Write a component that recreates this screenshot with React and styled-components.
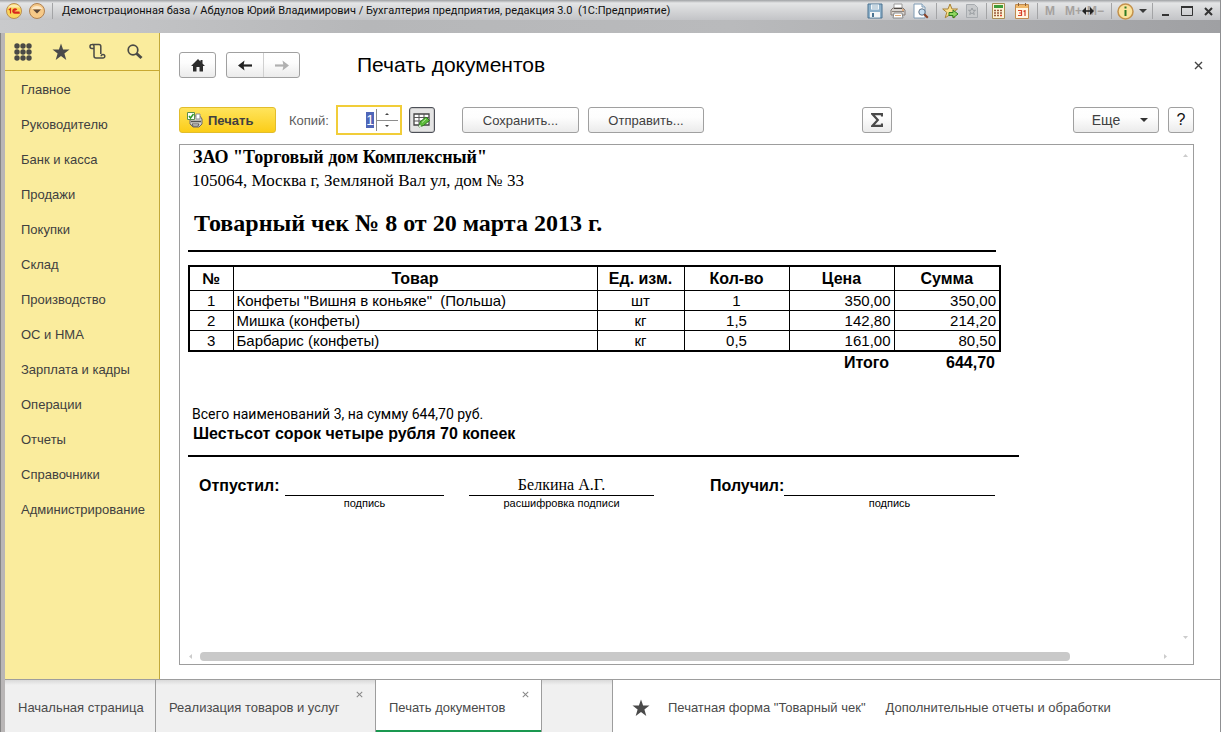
import React, { useEffect, useRef } from "react";
import styled, { createGlobalStyle, css } from "styled-components";

const SANS = '"Liberation Sans", Arial, sans-serif';
const SERIF = '"Liberation Serif", "Times New Roman", serif';
const LINE = "#9d9d9d";

const Global = createGlobalStyle`
  *, *::before, *::after { box-sizing: border-box; }
  body { margin: 0; font-family: ${SANS}; font-size: 13px; color: #3f3f3f; background: #fff; }
  button { font-family: inherit; font-size: inherit; color: inherit; padding: 0; margin: 0; border: 0; background: none; cursor: pointer; }
  h1, h2, p, ul { margin: 0; padding: 0; font-weight: normal; }
  svg { flex: none; }
`;

/* ---------- window frame ---------- */
const Window = styled.div`
  min-height: 100vh;
  display: flex;
  flex-direction: column;
  padding-left: 5px;
  border-right: 1px solid #8f9092;
  background: linear-gradient(90deg, #858585 0 1px, #b9b6b6 1px 5px, #fff 5px);
`;
const TitleBar = styled.header`
  height: 33px;
  margin-left: -5px;
  display: flex;
  align-items: flex-start;
  background:
    linear-gradient(90deg, #c9cacc 0, #b6b7b9 30%, #b9babc 60%, #9fa0a3 100%) 0 20px / 100% 13px no-repeat,
    linear-gradient(#9fa1a4 0, #e4e5e6 3px, #d2d3d5 12px, #c3c4c7 20px);
`;
const TitleGroup = styled.div`
  flex: none;
  display: flex;
  align-items: center;
  height: 22px;
  gap: ${(p) => p.$gap || 0}px;
  padding-left: ${(p) => p.$pad || 0}px;
`;
const TitleDivider = styled.span`
  width: 1px;
  height: 16px;
  background: #a3a4a6;
`;
const TitleText = styled.h1`
  flex: 1;
  min-width: 0;
  padding-left: 9px;
  font: 11px/22px Roboto, ${SANS};
  color: #101010;
  white-space: nowrap;
  overflow: hidden;
`;
const IconButton = styled.button`
  display: flex;
  align-items: center;
  justify-content: center;
  width: ${(p) => p.$w || 16}px;
  height: ${(p) => p.$h || 18}px;
`;
const MemoryButton = styled(IconButton)`
  justify-content: ${(p) => p.$align || "center"};
  font: bold 12px/18px ${SANS};
  color: #a5a19e;
`;
const ResizeMark = styled.span`
  position: relative;
  z-index: 1;
  display: flex;
`;

/* ---------- body ---------- */
const Body = styled.div`
  flex: 1;
  display: flex;
`;
const Sidebar = styled.nav`
  width: 155px;
  flex: none;
  background: #faec9d;
  border-right: 1px solid #c2a93a;
`;
const SideTools = styled.div`
  height: 38px;
  display: flex;
  align-items: center;
  justify-content: space-between;
  padding: 0 15px 0 9px;
  border-bottom: 1px solid #c8a932;
`;
const SideList = styled.ul`
  list-style: none;
  padding-top: 1px;
`;
const SideLink = styled.a`
  display: block;
  padding-left: 16px;
  line-height: 35px;
  color: #404040;
  text-decoration: none;
  white-space: nowrap;
`;

const Main = styled.main`
  flex: 1;
  min-width: 0;
  display: flex;
  flex-direction: column;
  padding: 19px 26px 14px 19px;
`;
const PageHead = styled.div`
  display: flex;
  align-items: center;
  height: 26px;
  margin-right: -9px;
`;
const PageTitle = styled.h2`
  flex: 1;
  padding-left: 57px;
  font-size: 21px;
  line-height: 28px;
  color: #000;
`;

const face = css`
  border: 1px solid #a0a0a0;
  border-radius: 3px;
  background: linear-gradient(#fff 0, #fdfdfd 40%, #ebebeb 100%);
`;
const Button = styled.button`
  ${face}
  display: flex;
  align-items: center;
  justify-content: center;
  width: ${(p) => p.$w}px;
  height: 26px;
  font-size: ${(p) => (p.$large ? 14 : 13)}px;
  color: #404040;
`;
const PrintButton = styled(Button)`
  gap: 5px;
  justify-content: flex-start;
  padding-left: 7px;
  border-color: #e2bd2c;
  background: linear-gradient(#ffe45c, #fbcd18);
  font-weight: bold;
`;
const ToggleButton = styled(Button)`
  border-color: #4c4f57;
  background: #e4e4e4;
  box-shadow: inset 0 0 0 1px #c9c9c9;
`;
const HelpButton = styled(Button)`
  font-size: 16px;
  color: #111;
`;
const NavGroup = styled.div`
  ${face}
  display: flex;
  margin-left: 10px;
  height: 26px;
`;
const NavHalf = styled.button`
  width: 36px;
  display: flex;
  align-items: center;
  justify-content: center;
  & + & { border-left: 1px solid #d0d0d0; }
`;
const Toolbar = styled.div`
  display: flex;
  align-items: center;
  height: 30px;
  margin: 27px 0 9px;
`;
const ToolGroup = styled.div`
  display: flex;
  align-items: center;
  gap: ${(p) => p.$gap}px;
  margin-left: ${(p) => p.$ml || 0}px;
`;
const Spring = styled.div`
  flex: ${(p) => p.$grow || 1};
`;
const CopyLabel = styled.label`
  margin: 0 7px 0 13px;
  font-size: 13px;
  color: #5c5c5c;
`;
const CopyField = styled.div`
  display: flex;
  align-items: stretch;
  width: 66px;
  height: 30px;
  padding: 2px;
  border: 2px solid #f1cd39;
  background: #fff;
`;
const CopyInput = styled.input`
  flex: 1;
  min-width: 0;
  padding: 0 2px 0 0;
  border: 0;
  outline: 0;
  text-align: right;
  font: 14px ${SANS};
  color: #222;
  caret-color: transparent;
  &::selection { background: #4f66b8; color: #fff; }
`;
const Stepper = styled.div`
  width: 22px;
  display: flex;
  flex-direction: column;
  border-left: 1px solid #8d8d8d;
`;
const Step = styled.button`
  flex: 1;
  display: flex;
  align-items: center;
  justify-content: center;
  & + & { border-top: 1px solid #8d8d8d; }
`;

/* ---------- print preview ---------- */
const Preview = styled.section`
  flex: 1;
  display: grid;
  grid-template-columns: minmax(0, 1fr) 16px;
  grid-template-rows: 1fr 15px;
  border: 1px solid ${LINE};
  color: #000;
`;
const Sheet = styled.article`
  padding: 2px 0 0 8px;
  overflow: hidden;
`;
const VScroll = styled.div`
  display: flex;
  flex-direction: column;
  justify-content: space-between;
  align-items: center;
  padding: 9px 0 10px;
`;
const HScroll = styled.div`
  display: flex;
  align-items: center;
  gap: 8px;
  padding: 0 10px 0 9px;
`;
const Track = styled.div`
  flex: 1;
`;
const Thumb = styled.div`
  width: 91%;
  height: 9px;
  border-radius: 4px;
  background: #c9c9c9;
`;
const Org = styled.p`
  padding-left: 5px;
  font: bold 18px/20px ${SERIF};
`;
const Address = styled.p`
  padding: 2px 0 0 4px;
  font: 17px/24px ${SERIF};
`;
const DocTitle = styled.h2`
  padding: 18px 0 2px 6px;
  font: bold 24px/24px ${SERIF};
`;
const Rule = styled.hr`
  width: ${(p) => p.$w}px;
  height: 2px;
  margin: ${(p) => p.$top}px 0 0;
  border: 0;
  background: #000;
`;
const Goods = styled.table`
  width: 811px;
  margin-top: 13px;
  table-layout: fixed;
  border-collapse: collapse;
  font-size: 15px;
  line-height: 19px;
  th, td { padding: 0 3px; border: 1px solid #000; white-space: pre; overflow: hidden; }
  thead th { height: 24px; border-top-width: 2px; font-size: 16px; }
  tbody td { height: 20px; }
  tbody tr:last-child td { border-bottom-width: 2px; }
  tr > :first-child { border-left-width: 2px; }
  tr > :last-child { border-right-width: 2px; }
  tfoot td { height: 22px; border: 0; padding-right: 5px; font-size: 16px; font-weight: bold; text-align: right; }
`;
const Cell = styled.td`
  text-align: ${(p) => p.$align || "center"};
`;
const Total = styled.p`
  padding: 31px 0 0 4px;
  font-size: 14px;
  line-height: 20px;
  font-family: Roboto, ${SANS};
`;
const Words = styled.p`
  padding-left: 5px;
  font-size: 16px;
  line-height: 20px;
  font-weight: bold;
`;
const Signatures = styled.div`
  display: flex;
  align-items: flex-start;
  padding: 19px 0 0 11px;
`;
const SignLabel = styled.span`
  width: ${(p) => p.$w}px;
  font-size: 16px;
  line-height: 20px;
  font-weight: bold;
`;
const SignLine = styled.div`
  width: ${(p) => p.$w}px;
  margin-right: ${(p) => p.$mr || 0}px;
  text-align: center;
`;
const SignName = styled.div`
  height: 20px;
  border-bottom: 1px solid #000;
  font: 16px/18px ${SERIF};
`;
const SignHint = styled.div`
  font-size: 11px;
  line-height: 14px;
`;

/* ---------- bottom panel ---------- */
const Bottom = styled.footer`
  display: flex;
  height: 53px;
  border-top: 1px solid ${LINE};
`;
const Tab = styled.div`
  position: relative;
  width: ${(p) => p.$w}px;
  flex: none;
  border-right: 1px solid ${LINE};
  background: ${(p) => (p.$active ? "#fff" : "linear-gradient(#d9d9d9 0, #f0f0f0 5px)")};
  ${(p) => p.$active && "box-shadow: inset 0 -2px #1a9850;"}
`;
const TabLink = styled.button`
  width: 100%;
  height: 52px;
  padding: 3px 0 0 13px;
  text-align: left;
  color: #4a4a4a;
  white-space: nowrap;
`;
const TabClose = styled.button`
  position: absolute;
  top: 11px;
  right: 12px;
  width: 7px;
  height: 7px;
  display: flex;
`;
const Favourites = styled.div`
  display: flex;
  align-items: center;
  gap: 20px;
  padding: 3px 0 0 19px;
  white-space: nowrap;
`;
const FavLink = styled.a`
  color: #4a4a4a;
  text-decoration: none;
`;
const FavStar = styled.span`
  display: flex;
  margin-right: -2px;
`;

/* ---------- drawings ---------- */
const Svg = ({ w = 16, h = w, vb, children }) => (
  <svg width={w} height={h} viewBox={vb || `0 0 ${w} ${h}`} fill="none" aria-hidden="true">{children}</svg>
);
const Star = ({ size = 18 }) => (
  <Svg w={size} vb="0 0 18 18"><path d="M9 0.5l2.1 6.1h6.4l-5.1 3.9 1.9 6.5L9 13.1 3.7 17l1.9-6.5L.5 6.6h6.4z" fill="#4a4a4a" /></Svg>
);
const Cross = ({ size = 9, color = "#444", sw = 1.4 }) => (
  <Svg w={size} vb="0 0 9 9"><path d="M1 1l7 7M8 1L1 8" stroke={color} strokeWidth={sw} /></Svg>
);
const Tri = ({ dir, w = 5, h = 3, color = "#ccc" }) => {
  const d = { up: `M0 ${h}h${w}L${w / 2} 0z`, down: `M0 0h${w}L${w / 2} ${h}z`, left: `M${w} 0v${h}L0 ${h / 2}z`, right: `M0 0v${h}L${w} ${h / 2}z` }[dir];
  return <Svg w={w} h={h}><path d={d} fill={color} /></Svg>;
};
const Logo = () => (
  <Svg w={16}>
    <circle cx="8" cy="8" r="7.5" fill="#fbd65a" stroke="#b98d55" />
    <path d="M2 4.500a6.500 5 0 0 1 12 0z" fill="#fdebb0" />
    <path d="M2.800 7 4.500 5.700V10.500M10.800 6.800A2.200 2.200 0 1 0 9 10.200h4.800M9.800 7.500A1 1 0 1 0 9 9h4.500" stroke="#d8261c" strokeWidth="1.200" />
  </Svg>
);
const MenuDisc = () => (
  <Svg w={16}>
    <circle cx="8" cy="8" r="7.5" fill="#f6c988" stroke="#b08050" />
    <path d="M2.5 6a6 5 0 0 1 11 0z" fill="#fde9c8" />
    <path d="M4 6.5h8L8 10.5z" fill="#5b4637" />
  </Svg>
);
const Floppy = () => (
  <Svg w={16}>
    <path d="M1 1h14v14H1z" fill="#8fb2cb" stroke="#4a7391" />
    <path d="M4 1.5h8v5H4z" fill="#f2f7fa" /><path d="M5 3h6M5 5h6" stroke="#9cb5c6" />
    <path d="M3 9h10v5.5H3z" fill="#f4f6f7" /><path d="M5 10h2v4H5z" fill="#4a7391" />
  </Svg>
);
const Printer = () => (
  <Svg w={16}>
    <path d="M4 1h8v6H4z" fill="#fff" stroke="#9a9a9a" />
    <path d="M1 7l2-2h10l2 2v5H1z" fill="#d9d4cf" stroke="#857c76" />
    <path d="M4 5.500h8" stroke="#4f4a46" /><path d="M2 8.500h12" stroke="#8b837d" />
    <path d="M4 10h8l1 5H3z" fill="#fff" stroke="#8a8a8a" />
    <path d="M5 12.500h6" stroke="#e0a873" /><path d="M12 7h2" stroke="#e48432" />
  </Svg>
);
const PreviewIcon = () => (
  <Svg w={16}>
    <path d="M1 1h8l3 3v11H1z" fill="#fff" stroke="#7f9bb4" /><path d="M9 1v3h3" fill="#dbe7f2" stroke="#7f9bb4" />
    <circle cx="9" cy="9" r="3.2" fill="#c7def0" stroke="#5f7286" /><path d="M11.3 11.3l3.5 3.5" stroke="#8a3f23" strokeWidth="2" />
  </Svg>
);
const AddStar = () => (
  <Svg w={17} vb="0 0 17 17">
    <path d="M8 1l2 5h5.5l-4.3 3.4 1.6 5.4L8 11.6l-4.8 3.2 1.6-5.4L.7 6H6z" fill="#fae08c" stroke="#a88238" />
    <path d="M7 9.5h4V7l5 4-5 4v-2.500H7z" fill="#8fd65f" stroke="#2e7d1c" />
  </Svg>
);
const PageStar = () => (
  <Svg w={16}>
    <path d="M2.500 1.500h8l3 3v10h-11z" fill="#c8cacc" stroke="#a7abaf" />
    <path d="M8 5l1 2.300h2.500l-2 1.600.8 2.600L8 10l-2.300 1.500.8-2.600-2-1.600H7z" stroke="#9a9ea2" />
  </Svg>
);
const Calc = () => (
  <Svg w={14} h={16}>
    <path d="M.5.5h12v15H.5z" fill="#fdf3d4" stroke="#a98d55" /><path d="M2 2h9v3H2z" fill="#3f9c3a" />
    <path d="M2 7.500h2M5 7.500h2M8 7.500h2M2 10h2M5 10h2M8 10h2M2 12.500h2M5 12.500h2" stroke="#9a5a3c" strokeWidth="1.500" />
    <path d="M8 12.500h2" stroke="#d8402a" strokeWidth="1.500" />
  </Svg>
);
const Calendar = () => (
  <Svg w={14} h={16}>
    <path d="M.5 1.500h13v14H.5z" fill="#fff6e2" stroke="#c08a4e" /><path d="M1 2h12v3H1z" fill="#f0b869" />
    <path d="M3.500 0v3M10.500 0v3" stroke="#8b6238" />
    <path d="M3 7.500h3.500v5H3M4 10h2.500M10 7v6M8.500 8.500L10 7.500" stroke="#d8402a" strokeWidth="1.200" />
  </Svg>
);
const Info = () => (
  <Svg w={17}>
    <circle cx="8.500" cy="8.500" r="7.500" fill="#fbe29b" stroke="#c3914b" strokeWidth="1.500" />
    <path d="M8.500 7v6M8.500 3.500v2" stroke="#2f7a24" strokeWidth="2" />
  </Svg>
);
const Arrows = () => (
  <Svg w={12} h={8}><path d="M2 4h8" stroke="#222" strokeWidth="1.600" /><path d="M4 0v8L0 4zM8 0v8l4-4z" fill="#222" /></Svg>
);
const GridDots = () => (
  <Svg w={18}>
    {[3, 9, 15].map((y) => [3, 9, 15].map((x) => <circle key={`${x}-${y}`} cx={x} cy={y} r="2.700" fill="#4a4a46" />))}
  </Svg>
);
const Scroll = () => (
  <Svg w={17}>
    <path d="M5 5.500H3a1.800 1.800 0 0 1 0-4h7A1.800 1.800 0 0 1 11.800 3.300V11M5 3.500V13a2 2 0 0 0 2 2h7a1.800 1.800 0 1 0-1.800-1.800M3 1.500a1.800 1.800 0 0 1 2 2" stroke="#4a4a46" strokeWidth="1.500" />
  </Svg>
);
const Magnifier = () => (
  <Svg w={16}><circle cx="6" cy="6" r="4.800" stroke="#4a4a46" strokeWidth="1.700" /><path d="M9.500 9.500l5 4.500" stroke="#4a4a46" strokeWidth="3" /></Svg>
);
const Home = () => (
  <Svg w={14} h={13}><path d="M7 0L0 7h2v5.500h3.500V8h3v4.500H12V7h2l-2.500-2.500V1h-2v1.500z" fill="#2c2c2c" /></Svg>
);
const Arrow = ({ flip, color }) => (
  <Svg w={14} h={11}>
    <g transform={flip ? "matrix(-1 0 0 1 14 0)" : undefined}>
      <path d="M2 5.500H14" stroke={color} strokeWidth="2.200" /><path d="M6.500 .5L0 5.500l6.500 5L5.500 5.500z" fill={color} />
    </g>
  </Svg>
);
const PrintMark = () => (
  <Svg w={16}>
    <path d="M5 7l3-3h5l2 3v5l-3 3H6l-3-3V8z" fill="#d5d3d0" stroke="#6a6661" />
    <path d="M9 2h4v5H9z" fill="#fff" stroke="#8f8f8f" /><path d="M5 12h7l-1 2H6z" fill="#fff" stroke="#555" />
    <path d="M4 9.500h10" stroke="#555" strokeWidth="1.500" />
    <path d="M.5.5h7v7h-7z" fill="#fff" stroke="#5a8f4c" /><path d="M2 4l1.500 2L6.500 2" stroke="#2f9a26" strokeWidth="1.500" />
  </Svg>
);
const EditGrid = () => (
  <Svg w={17} h={16}>
    <path d="M1 2h15v11H1z" fill="#fff" stroke="#444" strokeWidth="1.300" /><path d="M1 5.500h15M1 9h15M6 2v11M11 2v11" stroke="#555" />
    <path d="M6 15l1-5 6-5 3.500 3.500-6 5z" fill="#5dbb3c" stroke="#2c7a1c" /><path d="M9 10.500l4-3.500" stroke="#b5e89c" /><path d="M6 15l.5-2.500 2 2z" fill="#fff" />
  </Svg>
);
const Sigma = () => (
  <Svg w={12} h={14}><path d="M11 3.500V1.200H1.500L6.800 7l-5.300 5.800H11v-2.300" stroke="#4a4a4a" strokeWidth="2.200" /></Svg>
);

/* ---------- data ---------- */
const sections = ["Главное", "Руководителю", "Банк и касса", "Продажи", "Покупки", "Склад", "Производство", "ОС и НМА", "Зарплата и кадры", "Операции", "Отчеты", "Справочники", "Администрирование"];
const goods = [
  ["1", 'Конфеты "Вишня в коньяке"  (Польша)', "шт", "1", "350,00", "350,00"],
  ["2", "Мишка (конфеты)", "кг", "1,5", "142,80", "214,20"],
  ["3", "Барбарис (конфеты)", "кг", "0,5", "161,00", "80,50"],
];
const aligns = ["center", "left", "center", "center", "right", "right"];
const columns = [
  ["№", 44], ["Товар", 364], ["Ед. изм.", 87], ["Кол-во", 105], ["Цена", 105], ["Сумма", 106],
];

function CopiesInput() {
  const ref = useRef(null);
  useEffect(() => {
    ref.current.focus();
    ref.current.select();
  }, []);
  return (
    <CopyField>
      <CopyInput id="copies" ref={ref} type="text" inputMode="numeric" defaultValue="1" />
      <Stepper>
        <Step aria-label="Больше"><Tri dir="up" w={4} h={2} color="#444" /></Step>
        <Step aria-label="Меньше"><Tri dir="down" w={4} h={2} color="#444" /></Step>
      </Stepper>
    </CopyField>
  );
}

function Receipt() {
  return (
    <Sheet>
      <Org>ЗАО "Торговый дом Комплексный"</Org>
      <Address>105064, Москва г, Земляной Вал ул, дом № 33</Address>
      <DocTitle>Товарный чек № 8 от 20 марта 2013 г.</DocTitle>
      <Rule $w={808} $top={13} />
      <Goods>
        <colgroup>{columns.map(([name, w]) => <col key={name} width={w} />)}</colgroup>
        <thead><tr>{columns.map(([name]) => <th key={name} scope="col">{name}</th>)}</tr></thead>
        <tbody>
          {goods.map((row) => (
            <tr key={row[0]}>{row.map((v, i) => <Cell key={i} $align={aligns[i]}>{v}</Cell>)}</tr>
          ))}
        </tbody>
        <tfoot><tr><td colSpan={5}>Итого</td><td>644,70</td></tr></tfoot>
      </Goods>
      <Total>Всего наименований 3, на сумму 644,70 руб.</Total>
      <Words>Шестьсот сорок четыре рубля 70 копеек</Words>
      <Rule $w={831} $top={11} />
      <Signatures>
        <SignLabel $w={86}>Отпустил:</SignLabel>
        <SignLine $w={159} $mr={25}><SignName /><SignHint>подпись</SignHint></SignLine>
        <SignLine $w={185} $mr={56}><SignName>Белкина А.Г.</SignName><SignHint>расшифровка подписи</SignHint></SignLine>
        <SignLabel $w={74}>Получил:</SignLabel>
        <SignLine $w={211}><SignName /><SignHint>подпись</SignHint></SignLine>
      </Signatures>
    </Sheet>
  );
}

export default function App() {
  return (
    <>
      <Global />
      <Window>
        <TitleBar>
          <TitleGroup $gap={7} $pad={6}>
            <IconButton aria-label="1С"><Logo /></IconButton>
            <IconButton aria-label="Меню"><MenuDisc /></IconButton>
            <TitleDivider />
          </TitleGroup>
          <TitleText>Демонстрационная база / Абдулов Юрий Владимирович / Бухгалтерия предприятия, редакция 3.0&nbsp; (1С:Предприятие)</TitleText>
          <TitleGroup $gap={7}>
            <IconButton aria-label="Сохранить"><Floppy /></IconButton>
            <IconButton aria-label="Печать"><Printer /></IconButton>
            <IconButton aria-label="Просмотр"><PreviewIcon /></IconButton>
            <TitleDivider />
          </TitleGroup>
          <TitleGroup $gap={6} $pad={5}>
            <IconButton aria-label="В избранное"><AddStar /></IconButton>
            <IconButton aria-label="Избранное"><PageStar /></IconButton>
            <TitleDivider />
          </TitleGroup>
          <TitleGroup $gap={7} $pad={4}>
            <IconButton aria-label="Калькулятор"><Calc /></IconButton>
            <IconButton aria-label="Календарь"><Calendar /></IconButton>
            <TitleDivider />
          </TitleGroup>
          <TitleGroup $pad={5}>
            <MemoryButton $w={14}>M</MemoryButton>
          </TitleGroup>
          <TitleGroup $pad={8}>
            <MemoryButton $w={17}>M+</MemoryButton>
            <ResizeMark><Arrows /></ResizeMark>
            <MemoryButton $w={10} $align="flex-end">M−</MemoryButton>
          </TitleGroup>
          <TitleGroup $gap={5} $pad={7}>
            <TitleDivider />
            <IconButton $w={17} aria-label="Справка"><Info /></IconButton>
            <IconButton $w={8} aria-label="Параметры"><Tri dir="down" w={8} h={4} color="#3a3a3a" /></IconButton>
            <TitleDivider />
          </TitleGroup>
          <TitleGroup $gap={11} $pad={8}>
            <IconButton $w={9} aria-label="Свернуть"><Svg w={9}><path d="M1 8h7" stroke="#333" strokeWidth="2" /></Svg></IconButton>
            <IconButton $w={12} aria-label="Развернуть"><Svg w={12} h={10}><path d="M.5 1h11v8.500H.5z" stroke="#333" /><path d="M0 1h12" stroke="#333" strokeWidth="2" /></Svg></IconButton>
            <IconButton $w={9} aria-label="Закрыть"><Cross color="#333" sw={2} /></IconButton>
          </TitleGroup>
          <TitleGroup $pad={7} />
        </TitleBar>

        <Body>
          <Sidebar>
            <SideTools>
              <IconButton $w={18} aria-label="Разделы"><GridDots /></IconButton>
              <IconButton $w={18} aria-label="Избранное"><Star /></IconButton>
              <IconButton $w={17} aria-label="История"><Scroll /></IconButton>
              <IconButton $w={18} aria-label="Поиск"><Magnifier /></IconButton>
            </SideTools>
            <SideList>
              {sections.map((s) => <li key={s}><SideLink href="#">{s}</SideLink></li>)}
            </SideList>
          </Sidebar>

          <Main>
            <PageHead>
              <Button $w={37} aria-label="Домой"><Home /></Button>
              <NavGroup>
                <NavHalf aria-label="Назад"><Arrow color="#222" /></NavHalf>
                <NavHalf aria-label="Вперед"><Arrow flip color="#b0b0b0" /></NavHalf>
              </NavGroup>
              <PageTitle>Печать документов</PageTitle>
              <IconButton $w={9} aria-label="Закрыть"><Cross /></IconButton>
            </PageHead>

            <Toolbar>
              <PrintButton $w={97}><PrintMark />Печать</PrintButton>
              <CopyLabel htmlFor="copies">Копий:</CopyLabel>
              <CopiesInput />
              <ToolGroup $ml={7}><ToggleButton $w={26} aria-label="Редактирование"><EditGrid /></ToggleButton></ToolGroup>
              <ToolGroup $ml={27} $gap={9}>
                <Button $w={117}>Сохранить...</Button>
                <Button $w={116}>Отправить...</Button>
              </ToolGroup>
              <Spring $grow={158} />
              <Button $w={30} aria-label="Сумма"><Sigma /></Button>
              <Spring $grow={181} />
              <ToolGroup $gap={9}>
                <Button $w={86} $large>
                  <ToolGroup $gap={20} $ml={8}>Еще<Tri dir="down" w={8} h={4} color="#333" /></ToolGroup>
                </Button>
                <HelpButton $w={26}>?</HelpButton>
              </ToolGroup>
            </Toolbar>

            <Preview>
              <Receipt />
              <VScroll><Tri dir="up" /><Tri dir="down" /></VScroll>
              <HScroll>
                <Tri dir="left" w={3} h={5} />
                <Track><Thumb /></Track>
                <Tri dir="right" w={3} h={5} />
              </HScroll>
            </Preview>
          </Main>
        </Body>

        <Bottom>
          <Tab $w={151}><TabLink>Начальная страница</TabLink></Tab>
          <Tab $w={220}>
            <TabLink>Реализация товаров и услуг</TabLink>
            <TabClose aria-label="Закрыть вкладку"><Cross size={7} color="#888" sw={1.3} /></TabClose>
          </Tab>
          <Tab $w={166} $active>
            <TabLink>Печать документов</TabLink>
            <TabClose aria-label="Закрыть вкладку"><Cross size={7} color="#888" sw={1.3} /></TabClose>
          </Tab>
          <Tab $w={71} />
          <Favourites>
            <FavStar><Star /></FavStar>
            <FavLink href="#">Печатная форма "Товарный чек"</FavLink>
            <FavLink href="#">Дополнительные отчеты и обработки</FavLink>
          </Favourites>
        </Bottom>
      </Window>
    </>
  );
}
